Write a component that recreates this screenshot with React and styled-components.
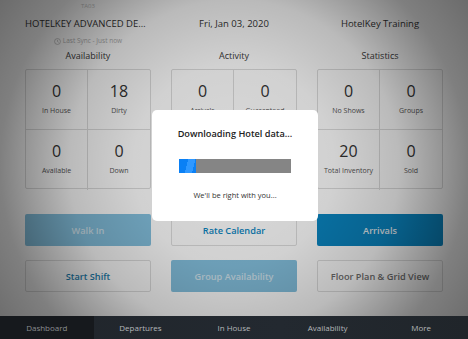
import styled, { createGlobalStyle } from "styled-components";

const GlobalStyle = createGlobalStyle`
  html, body {
    margin: 0;
    padding: 0;
    background: #fff;
  }
  body {
    font-family: "Open Sans", "Liberation Sans", sans-serif;
  }
`;

const Page = styled.div`
  width: 468px;
  height: 339px;
  display: flex;
  flex-direction: column;
  position: relative;
  overflow: hidden;
`;

const Main = styled.div`
  position: relative;
  height: 316px;
  padding: 0 25px;
  box-sizing: border-box;
`;

const Row = styled.div`
  display: grid;
  grid-template-columns: repeat(3, 126px);
  column-gap: 20px;
  margin-top: ${(props) => props.mt || 0}px;
`;

const Tiny = styled.div`
  font-size: 6px;
  line-height: 9px;
  color: #c4c4c4;
  text-align: center;
`;

const HeadText = styled.div`
  font-size: 9.5px;
  line-height: 14px;
  color: #333;
  text-align: center;
  white-space: nowrap;
  overflow: hidden;
  text-overflow: ellipsis;
`;

const Sync = styled.div`
  display: flex;
  align-items: center;
  justify-content: center;
  gap: 2px;
  font-size: 6.5px;
  line-height: 10px;
  color: #b0b0b0;
`;

const Section = styled.div`
  display: flex;
  flex-direction: column;
`;

const SectionTitle = styled.div`
  font-size: 9px;
  font-weight: 500;
  line-height: 12px;
  color: #3a3a3a;
  text-align: center;
  margin-bottom: 7.5px;
`;

const Box = styled.div`
  display: grid;
  grid-template-columns: 1fr 1fr;
  grid-template-rows: 60px 60px;
  border: 1px solid #dcdcdc;
  border-radius: 2px;
  box-sizing: border-box;
  height: 120px;
`;

const Cell = styled.div`
  display: flex;
  flex-direction: column;
  align-items: center;
  padding-top: 12px;
  box-sizing: border-box;
  border-right: ${(props) => (props.right ? "1px solid #dcdcdc" : "none")};
  border-bottom: ${(props) => (props.bottom ? "1px solid #dcdcdc" : "none")};
`;

const Num = styled.div`
  font-size: 16px;
  line-height: 19px;
  color: #333;
`;

const Label = styled.div`
  font-size: 7px;
  line-height: 10px;
  margin-top: 5px;
  color: #555;
  white-space: nowrap;
`;

const Buttons = styled.div`
  display: grid;
  grid-template-columns: repeat(3, 126px);
  grid-auto-rows: 32px;
  column-gap: 20px;
  row-gap: 14px;
  margin-top: 25px;
`;

const Button = styled.div`
  display: flex;
  align-items: center;
  justify-content: center;
  border-radius: 2px;
  box-sizing: border-box;
  font-size: 9.2px;
  font-weight: 600;
  white-space: nowrap;
  background: ${(props) =>
    props.variant === "solid"
      ? "#0a86c2"
      : props.variant === "faded"
      ? "#84c1df"
      : "#fff"};
  color: ${(props) =>
    props.variant === "solid"
      ? "#e6eef3"
      : props.variant === "faded"
      ? "#d2e5ef"
      : props.color || "#0a86c2"};
  border: 1px solid
    ${(props) => (props.variant === "outline" ? "#dedede" : "transparent")};
`;

const Dim = styled.div`
  position: absolute;
  inset: 0;
  background: radial-gradient(
    circle at 234px 165px,
    rgba(0, 0, 0, 0.15) 0px,
    rgba(0, 0, 0, 0.18) 100px,
    rgba(0, 0, 0, 0.27) 165px,
    rgba(0, 0, 0, 0.5) 234px,
    rgba(0, 0, 0, 0.6) 300px
  );
`;

const Modal = styled.div`
  position: absolute;
  left: 152px;
  top: 110px;
  width: 166px;
  height: 111px;
  box-sizing: border-box;
  padding: 18px 27px 0;
  background: #fff;
  border-radius: 5px;
  display: flex;
  flex-direction: column;
  align-items: center;
`;

const ModalTitle = styled.div`
  font-size: 9.2px;
  font-weight: 600;
  line-height: 12px;
  color: #222;
  white-space: nowrap;
`;

const Progress = styled.div`
  width: 112px;
  height: 14px;
  margin-top: 19px;
  background: #858585;
`;

const Fill = styled.div`
  height: 100%;
  background: linear-gradient(
    105deg,
    #0a80f5 0 45%,
    #2f98ff 45% 80%,
    #0a80f5 80%
  );
`;

const ModalText = styled.div`
  font-size: 7.5px;
  line-height: 10px;
  margin-top: 17px;
  color: #333;
  white-space: nowrap;
`;

const TabBar = styled.div`
  height: 23px;
  display: grid;
  grid-template-columns: repeat(5, 1fr);
  background: linear-gradient(90deg, #20252b, #232930 60%, #20252a);
`;

const Tab = styled.div`
  display: flex;
  align-items: center;
  justify-content: center;
  font-size: 8px;
  color: ${(props) => (props.active ? "#8a8d90" : "#b4b7ba")};
  background: ${(props) => (props.active ? "#16191d" : "transparent")};
`;

const ClockIcon = () => (
  <svg width="7" height="7" viewBox="0 0 10 10">
    <circle cx="5" cy="5" r="4.2" fill="none" stroke="#b0b0b0" strokeWidth="1" />
    <path d="M5 2.6V5l1.7 1.2" fill="none" stroke="#b0b0b0" strokeWidth="1" />
  </svg>
);

const sections = [
  {
    title: "Availability",
    cells: [
      ["0", "In House"],
      ["18", "Dirty"],
      ["0", "Available"],
      ["0", "Down"],
    ],
  },
  {
    title: "Activity",
    cells: [
      ["0", "Arrivals"],
      ["0", "Guaranteed"],
      ["0", "Departures"],
      ["0", "Walk Ins"],
    ],
  },
  {
    title: "Statistics",
    cells: [
      ["0", "No Shows"],
      ["0", "Groups"],
      ["20", "Total Inventory"],
      ["0", "Sold"],
    ],
  },
];

const tabs = ["Dashboard", "Departures", "In House", "Availability", "More"];

const App = () => {
  const progress = 15;

  return (
    <Page>
      <GlobalStyle />
      <Main>
        <Row mt={2}>
          <Tiny>TA03</Tiny>
        </Row>
        <Row mt={6}>
          <HeadText>HOTELKEY ADVANCED DEMO HOTEL</HeadText>
          <HeadText>Fri, Jan 03, 2020</HeadText>
          <HeadText>HotelKey Training</HeadText>
        </Row>
        <Row mt={5}>
          <Sync>
            <ClockIcon />
            Last Sync - Just now
          </Sync>
        </Row>
        <Row mt={3.5}>
          {sections.map((s) => (
            <Section key={s.title}>
              <SectionTitle>{s.title}</SectionTitle>
              <Box>
                {s.cells.map(([n, l], i) => (
                  <Cell key={l} right={i % 2 === 0} bottom={i < 2}>
                    <Num>{n}</Num>
                    <Label>{l}</Label>
                  </Cell>
                ))}
              </Box>
            </Section>
          ))}
        </Row>
        <Buttons>
          <Button variant="faded">Walk In</Button>
          <Button variant="outline">Rate Calendar</Button>
          <Button variant="solid">Arrivals</Button>
          <Button variant="outline" color="#1c7fb0">
            Start Shift
          </Button>
          <Button variant="faded">Group Availability</Button>
          <Button variant="outline" color="#707070">
            Floor Plan &amp; Grid View
          </Button>
        </Buttons>
        <Dim />
        <Modal>
          <ModalTitle>Downloading Hotel data...</ModalTitle>
          <Progress>
            <Fill style={{ width: `${progress}%` }} />
          </Progress>
          <ModalText>We'll be right with you...</ModalText>
        </Modal>
      </Main>
      <TabBar>
        {tabs.map((t, i) => (
          <Tab key={t} active={i === 0}>
            {t}
          </Tab>
        ))}
      </TabBar>
    </Page>
  );
};

export default App;
